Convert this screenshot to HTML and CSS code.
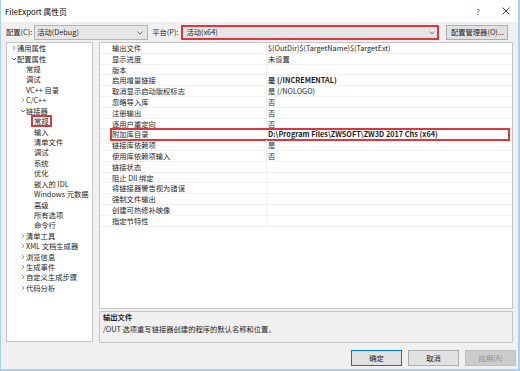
FILE: index.html
```html
<!DOCTYPE html>
<html>
<head>
    <title>FileExport 属性页</title>
    <meta charset="utf-8">
    <link rel="stylesheet" href="styles.css">
</head>
<body>
<div class="dialog">
    <div class="titlebar">
        <span class="title">FileExport 属性页</span>
        <span class="help">?</span>
        <svg class="close" width="8" height="8" viewBox="0 0 8 8"><path d="M0.5 0.5 L7.5 7.5 M7.5 0.5 L0.5 7.5" stroke="#333" stroke-width="0.9" fill="none"/></svg>
    </div>

    <div class="toolbar">
        <span class="label">配置(C):</span>
        <div class="combo config">
            <span>活动(Debug)</span>
            <svg width="6" height="4" viewBox="0 0 6 4"><path d="M0.5 0.5 L3 3 L5.5 0.5" stroke="#777" fill="none"/></svg>
        </div>
        <span class="label platform-label">平台(P):</span>
        <div class="combo platform mark">
            <span>活动(x64)</span>
            <svg width="6" height="4" viewBox="0 0 6 4"><path d="M0.5 0.5 L3 3 L5.5 0.5" stroke="#777" fill="none"/></svg>
        </div>
        <div class="btn manager">配置管理器(O)...</div>
    </div>

    <div class="main">
        <div class="tree">
            <div class="node l1"><svg class="arrow" viewBox="0 0 6 6"><path d="M2 1 L4 3 L2 5" stroke="#999" fill="none"/></svg><span>通用属性</span></div>
            <div class="node l1"><svg class="arrow" viewBox="0 0 6 6"><path d="M1 2 L3 4 L5 2" stroke="#666" fill="none"/></svg><span>配置属性</span></div>
            <div class="node l2"><i class="arrow"></i><span>常规</span></div>
            <div class="node l2"><i class="arrow"></i><span>调试</span></div>
            <div class="node l2"><i class="arrow"></i><span>VC++ 目录</span></div>
            <div class="node l2"><svg class="arrow" viewBox="0 0 6 6"><path d="M2 1 L4 3 L2 5" stroke="#999" fill="none"/></svg><span>C/C++</span></div>
            <div class="node l2"><svg class="arrow" viewBox="0 0 6 6"><path d="M1 2 L3 4 L5 2" stroke="#666" fill="none"/></svg><span>链接器</span></div>
            <div class="node l3"><i class="arrow"></i><span class="selected">常规</span></div>
            <div class="node l3"><i class="arrow"></i><span>输入</span></div>
            <div class="node l3"><i class="arrow"></i><span>清单文件</span></div>
            <div class="node l3"><i class="arrow"></i><span>调试</span></div>
            <div class="node l3"><i class="arrow"></i><span>系统</span></div>
            <div class="node l3"><i class="arrow"></i><span>优化</span></div>
            <div class="node l3"><i class="arrow"></i><span>嵌入的 IDL</span></div>
            <div class="node l3"><i class="arrow"></i><span>Windows 元数据</span></div>
            <div class="node l3"><i class="arrow"></i><span>高级</span></div>
            <div class="node l3"><i class="arrow"></i><span>所有选项</span></div>
            <div class="node l3"><i class="arrow"></i><span>命令行</span></div>
            <div class="node l2"><svg class="arrow" viewBox="0 0 6 6"><path d="M2 1 L4 3 L2 5" stroke="#999" fill="none"/></svg><span>清单工具</span></div>
            <div class="node l2"><svg class="arrow" viewBox="0 0 6 6"><path d="M2 1 L4 3 L2 5" stroke="#999" fill="none"/></svg><span>XML 文档生成器</span></div>
            <div class="node l2"><svg class="arrow" viewBox="0 0 6 6"><path d="M2 1 L4 3 L2 5" stroke="#999" fill="none"/></svg><span>浏览信息</span></div>
            <div class="node l2"><svg class="arrow" viewBox="0 0 6 6"><path d="M2 1 L4 3 L2 5" stroke="#999" fill="none"/></svg><span>生成事件</span></div>
            <div class="node l2"><svg class="arrow" viewBox="0 0 6 6"><path d="M2 1 L4 3 L2 5" stroke="#999" fill="none"/></svg><span>自定义生成步骤</span></div>
            <div class="node l2"><svg class="arrow" viewBox="0 0 6 6"><path d="M2 1 L4 3 L2 5" stroke="#999" fill="none"/></svg><span>代码分析</span></div>
        </div>

        <div class="right">
            <div class="grid">
                <div class="row"><div class="name">输出文件</div><div class="value">$(OutDir)$(TargetName)$(TargetExt)</div></div>
                <div class="row"><div class="name">显示进度</div><div class="value">未设置</div></div>
                <div class="row"><div class="name">版本</div><div class="value"></div></div>
                <div class="row"><div class="name">启用增量链接</div><div class="value bold">是 (/INCREMENTAL)</div></div>
                <div class="row"><div class="name">取消显示启动版权标志</div><div class="value">是 (/NOLOGO)</div></div>
                <div class="row"><div class="name">忽略导入库</div><div class="value">否</div></div>
                <div class="row"><div class="name">注册输出</div><div class="value">否</div></div>
                <div class="row"><div class="name">逐用户重定向</div><div class="value">否</div></div>
                <div class="row marked"><div class="name">附加库目录</div><div class="value bold">D:\Program Files\ZWSOFT\ZW3D 2017 Chs (x64)</div></div>
                <div class="row"><div class="name">链接库依赖项</div><div class="value">是</div></div>
                <div class="row"><div class="name">使用库依赖项输入</div><div class="value">否</div></div>
                <div class="row"><div class="name">链接状态</div><div class="value"></div></div>
                <div class="row"><div class="name">阻止 Dll 绑定</div><div class="value"></div></div>
                <div class="row"><div class="name">将链接器警告视为错误</div><div class="value"></div></div>
                <div class="row"><div class="name">强制文件输出</div><div class="value"></div></div>
                <div class="row"><div class="name">创建可热修补映像</div><div class="value"></div></div>
                <div class="row"><div class="name">指定节特性</div><div class="value"></div></div>
            </div>
            <div class="desc">
                <div class="desc-title">输出文件</div>
                <div class="desc-text">/OUT 选项重写链接器创建的程序的默认名称和位置。</div>
            </div>
        </div>
    </div>

    <div class="buttons">
        <div class="btn default">确定</div>
        <div class="btn">取消</div>
        <div class="btn disabled">应用(A)</div>
    </div>
</div>
</body>
</html>
```

FILE: styles.css
```css
body { margin: 0; font-family: "Noto Sans CJK SC", "Noto Sans", sans-serif; font-size: 7.3px; color: #1e1e1e; }

.dialog { width: 520px; height: 371px; box-sizing: border-box; background: #f0f0f0;
          border: 1px solid #a6d2f3; border-top: none; border-right-width: 2px; border-bottom-width: 2px;
          display: flex; flex-direction: column; }

.titlebar { height: 22px; background: #fff; display: flex; align-items: center; padding: 0 0 0 4px; flex-shrink: 0; }
.title { font-size: 7.8px; color: #000; flex: 1; }
.help { width: 10px; text-align: center; color: #444; font-size: 8px; margin-right: 19px; }
.close { margin-right: 8px; }

.toolbar { display: flex; align-items: center; height: 15px; margin-top: 3px; padding-left: 5px; }
.label { line-height: 15px; }
.combo { height: 15px; box-sizing: border-box; background: #e6e6e6; border: 1px solid #b4b4b4;
         display: flex; align-items: center; justify-content: space-between; padding: 0 4px 0 2px; }
.combo span { line-height: 13px; }
.config { width: 114px; margin-left: 2px; }
.platform-label { margin-left: 4px; }
.platform { width: 258px; margin-left: 3px; padding-left: 3px; padding-right: 2px; }
.mark { border: 2px solid #e2343c; }
.manager { width: 62px; margin-left: 7px; }

.btn { height: 15px; box-sizing: border-box; background: #e1e1e1; border: 1px solid #adadad;
       display: flex; align-items: center; justify-content: center; line-height: 13px; }

.main { display: flex; gap: 6px; padding: 0 5px; margin-top: 2px; height: 301px; }

.tree { width: 87px; height: 300px; box-sizing: border-box; background: #fff; border: 1px solid #c6c6c6; }
.node { display: flex; align-items: center; height: 10.43px; line-height: 10px; white-space: nowrap; }
.node .arrow { width: 6px; height: 6px; flex-shrink: 0; }
.l1 { padding-left: 4px; }
.l2 { padding-left: 13px; }
.l3 { padding-left: 21px; }
.selected { border: 2px solid #e2343c; padding: 0 1px; margin-left: -3px; line-height: 8px; }

.right { width: 414px; display: flex; flex-direction: column; gap: 2px; }
.grid { height: 267px; box-sizing: border-box; background: #fff; border: 1px solid #c6c6c6; }
.row { display: flex; height: 10.8px; box-sizing: border-box; border-bottom: 1px solid #f2f2f2; position: relative; }
.name { width: 166px; padding-left: 12px; box-sizing: border-box; line-height: 10px; white-space: nowrap; }
.value { flex: 1; border-left: 1px solid #f0f0f0; padding-left: 1px; line-height: 10px; white-space: nowrap; }
.bold { font-weight: bold; }
.marked::after { content: ""; position: absolute; left: 10px; right: 2px; top: -1px; bottom: -2px; border: 2px solid #e2343c; }

.desc { height: 32px; box-sizing: border-box; border: 1px solid #c6c6c6; background: #f0f0f0; padding: 0 3px; }
.desc-title { font-weight: bold; line-height: 10px; }
.desc-text { line-height: 11px; margin-top: 2px; }

.buttons { display: flex; justify-content: flex-end; gap: 6px; padding-right: 2px; margin-top: 7px; }
.buttons .btn { width: 51px; height: 16px; }
.default { border-color: #0078d7; }
.disabled { background: #cccccc; border-color: #bfbfbf; color: #8a8a8a; }
```
